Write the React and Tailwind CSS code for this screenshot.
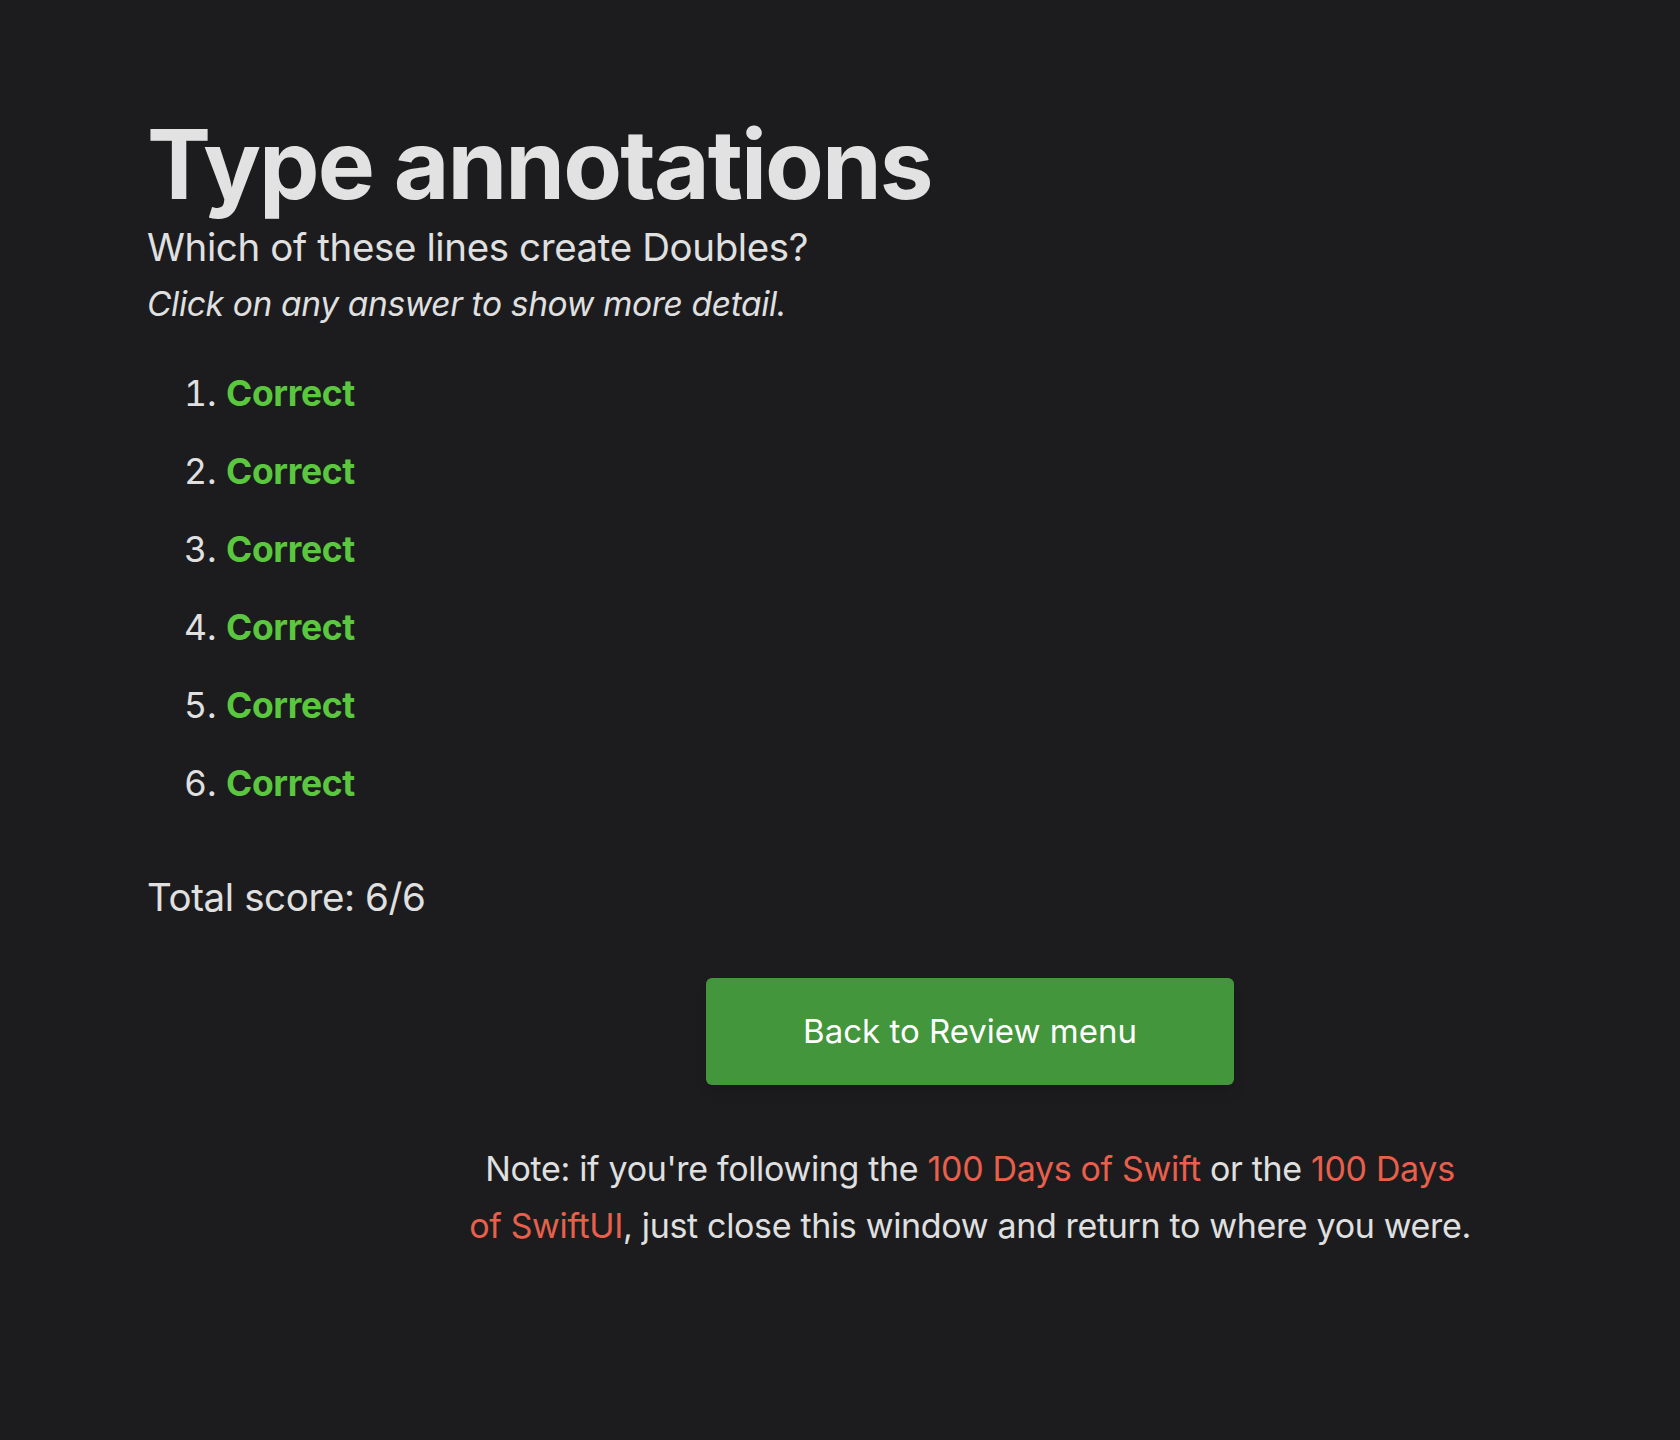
export default function App() {
  const answers = [1, 2, 3, 4, 5, 6];

  return (
    <div
      className="min-h-screen bg-[#1c1c1e] text-[#e0e0e0] antialiased"
      style={{ fontFamily: "Inter, 'Noto Sans', sans-serif" }}
    >
      <div className="pl-[147px] pt-[110px]">
        <h1 className="text-[96px] font-bold leading-[108px] tracking-[-0.02em] text-[#e2e2e2]">
          Type annotations
        </h1>
        <h2 className="mt-[6px] text-[38.5px] leading-[46px] font-normal tracking-[-0.01em]">
          Which of these lines create Doubles?
        </h2>
        <p className="mt-[13px] text-[33.5px] italic leading-[42px] tracking-[-0.01em]">
          Click on any answer to show more detail.
        </p>

        {/* Answers */}
        <ol className="mt-[49px] flex list-decimal flex-col gap-[38px] pl-[79px] text-[35.5px] leading-[40px]">
          {answers.map((n) => (
            <li key={n}>
              <span className="font-bold text-[#5bc73f] tracking-[-0.01em]">Correct</span>
            </li>
          ))}
        </ol>

        <p className="mt-[70px] text-[38.5px] leading-[46px] tracking-[-0.01em]">
          Total score: 6/6
        </p>
      </div>

      <div className="flex flex-col items-center pl-[260px] pt-[58px] pb-[220px]">
        <button
          type="button"
          className="flex h-[107px] w-[528px] items-center justify-center rounded-[6px] bg-[#43963b] text-[33px] text-white shadow-lg"
        >
          Back to Review menu
        </button>

        <p className="mt-[55px] w-[1100px] text-center text-[34px] leading-[57px] tracking-[-0.01em]">
          Note: if you're following the{" "}
          <a className="text-[#e8604c]">100 Days of Swift</a> or the{" "}
          <a className="text-[#e8604c]">
            100 Days
            <br />
            of SwiftUI
          </a>
          , just close this window and return to where you were.
        </p>
      </div>
    </div>
  );
}
